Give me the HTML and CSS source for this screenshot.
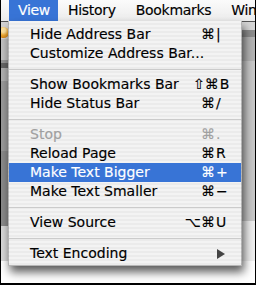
FILE: index.html
```html
<!DOCTYPE html>
<html>
<head>
<meta charset="utf-8">
<link rel="stylesheet" href="styles.css">
</head>
<body>
<div class="screen">
  <div class="menubar">
    <span class="mb-item active">View</span>
    <span class="mb-item">History</span>
    <span class="mb-item">Bookmarks</span>
    <span class="mb-item">Window</span>
  </div>
  <div class="desk">
    <div class="strip-left"><span class="light"></span></div>
    <div class="menu">
      <div class="item"><span class="label">Hide Address Bar</span><span class="sc"><span class="mod">⌘</span><span class="key">|</span></span></div>
      <div class="item"><span class="label">Customize Address Bar...</span></div>
      <div class="sep"></div>
      <div class="item"><span class="label">Show Bookmarks Bar</span><span class="sc"><span class="mod">⇧⌘</span><span class="key">B</span></span></div>
      <div class="item"><span class="label">Hide Status Bar</span><span class="sc"><span class="mod">⌘</span><span class="key">/</span></span></div>
      <div class="sep"></div>
      <div class="item disabled"><span class="label">Stop</span><span class="sc"><span class="mod">⌘</span><span class="key">.</span></span></div>
      <div class="item"><span class="label">Reload Page</span><span class="sc"><span class="mod">⌘</span><span class="key">R</span></span></div>
      <div class="item selected"><span class="label">Make Text Bigger</span><span class="sc"><span class="mod">⌘</span><span class="key">+</span></span></div>
      <div class="item"><span class="label">Make Text Smaller</span><span class="sc"><span class="mod">⌘</span><span class="key">−</span></span></div>
      <div class="sep"></div>
      <div class="item"><span class="label">View Source</span><span class="sc"><span class="mod">⌥⌘</span><span class="key">U</span></span></div>
      <div class="sep"></div>
      <div class="item"><span class="label">Text Encoding</span><span class="arrow"></span></div>
    </div>
    <div class="strip-right"></div>
  </div>
</div>
</body>
</html>
```
FILE: styles.css
```css
* { box-sizing: border-box; }
html, body { margin: 0; padding: 0; background: #fff; }
body { font-family: "DejaVu Sans", sans-serif; }

.screen {
  width: 256px;
  height: 285px;
  border-left: 1px solid #000;
  border-right: 1px solid #000;
  border-bottom: 2px solid #000;
  background: #fff;
  overflow: hidden;
  display: flex;
  flex-direction: column;
}

.menubar {
  height: 21px;
  flex: none;
  display: flex;
  align-items: stretch;
  padding-left: 8px;
  background: linear-gradient(#fbfbfb, #ececec);
  font-size: 14px;
  letter-spacing: -0.3px;
  line-height: 21px;
  color: #000;
  white-space: nowrap;
  overflow: hidden;
  -webkit-text-stroke: 0.15px currentColor;
}
.mb-item { padding: 0 10px; }
.mb-item.active {
  padding: 0 8px 0 9px;
  background: #3874d6;
  color: #fff;
}

.desk {
  flex: 1;
  display: grid;
  grid-template-columns: 7px 234px 1fr;
  align-items: start;
}

.strip-left {
  align-self: stretch;
  overflow: hidden;
  padding-top: 6px;
  background: linear-gradient(to bottom,
    #555 0 1px, #d4d4d4 1px 18px, #c2c2c2 18px 39px,
    #999 39px 42px, #666 42px 47px, #b0b0b0 47px 60px,
    #9a9a9a 60px 130px, #8a8a8a 130px 205px,
    #d8d8d8 205px 240px, #fff 240px);
}
.light {
  display: block;
  width: 11px;
  height: 11px;
  margin-left: -3px;
  border-radius: 50%;
  background: radial-gradient(circle at 50% 30%, #ffe3a0 0 2px, #f0a830 5px, #c07010 100%);
}

.strip-right {
  align-self: stretch;
  background: linear-gradient(to bottom,
    #555 0 1px, #d6d6d6 1px 9px, #8c8c8c 9px 16px, #b4b4b4 16px 40px,
    #c8c8c8 40px 200px, #eee 200px 240px, #fff 240px);
}

.menu {
  position: relative;
  z-index: 1;
  border: 1px solid rgba(0,0,0,0.25);
  border-top: none;
  padding: 4px 0 2px;
  background: repeating-linear-gradient(to bottom, #f3f3f3 0 2px, #ebebeb 2px 4px);
  box-shadow: 2px 6px 9px rgba(0,0,0,0.65);
  font-size: 14px;
  color: #000;
  white-space: nowrap;
  -webkit-text-stroke: 0.15px currentColor;
}

.item {
  height: 19px;
  line-height: 19px;
  display: flex;
  align-items: center;
  padding-left: 21px;
  padding-right: 14px;
}
.item.disabled { color: #a0a0a0; }
.item.selected { background: #3874d6; color: #fff; }

.label { flex: 1; }
.sc { display: flex; }
.mod { width: 40px; text-align: right; }
.key { width: 12px; text-align: left; padding-left: 1px; }

.arrow {
  width: 0;
  height: 0;
  margin-right: 2px;
  border-top: 5px solid transparent;
  border-bottom: 5px solid transparent;
  border-left: 8px solid #444;
}

.sep {
  height: 12px;
  display: flex;
  align-items: center;
}
.sep::before {
  content: "";
  display: block;
  width: 100%;
  height: 1px;
  background: #cbcbcb;
}
```
